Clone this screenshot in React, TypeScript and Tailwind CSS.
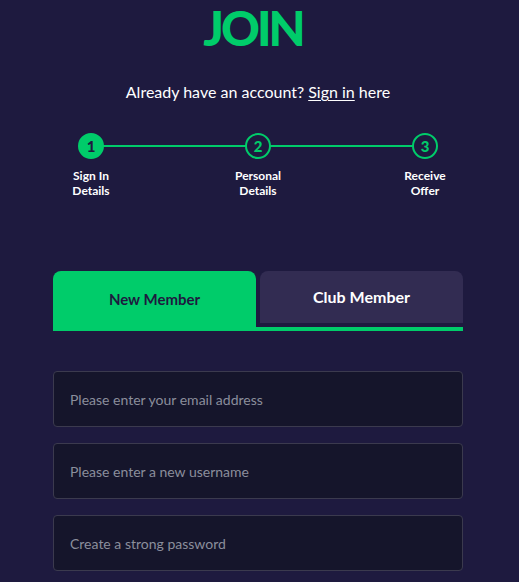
import React, { useState } from 'react';

const steps = [
  { n: 1, label: ['Sign In', 'Details'] },
  { n: 2, label: ['Personal', 'Details'] },
  { n: 3, label: ['Receive', 'Offer'] },
];

export default function App() {
  const [tab, setTab] = useState<'new' | 'club'>('new');

  return (
    <div className="min-h-[582px] bg-[#1e1a3f] font-['Lato','Open_Sans',sans-serif] text-white">
      <div className="w-[410px] ml-[53px] pt-[4px]">
        <h1 className="text-center text-[48px] leading-[48px] font-black text-[#00cc6a] tracking-[-3px] pr-[10px]">JOIN</h1>

        <p className="mt-[30px] text-center text-[16px] leading-[20px]">
          Already have an account? <a href="#" className="underline underline-offset-2">Sign in</a> here
        </p>

        {/* Stepper */}
        <div className="relative mt-[31px] flex justify-between">
          <div className="absolute left-[38px] right-[38px] top-[12px] h-[2px] bg-[#00cc6a]" />
          {steps.map((s) => (
            <div key={s.n} className="relative w-[76px] flex flex-col items-center">
              <div
                className={`w-[26px] h-[26px] rounded-full border-2 border-[#00cc6a] flex items-center justify-center text-[15px] font-black ${
                  s.n === 1 ? 'bg-[#00cc6a] text-[#1e1a3f]' : 'bg-[#1e1a3f] text-[#00cc6a]'
                }`}
              >
                {s.n}
              </div>
              <div className="mt-[9px] text-center text-[12px] leading-[15px] font-bold">
                {s.label[0]}
                <br />
                {s.label[1]}
              </div>
            </div>
          ))}
        </div>

        {/* Tabs */}
        <div className="mt-[73px] border-b-4 border-[#00cc6a] flex gap-[4px] items-start">
          <button
            onClick={() => setTab('new')}
            className={`flex-1 h-[56px] rounded-t-[8px] text-[15px] font-bold ${
              tab === 'new' ? 'bg-[#00cc6a] text-[#1e1a3f]' : 'bg-[#322c52] text-white'
            }`}
          >
            New Member
          </button>
          <button
            onClick={() => setTab('club')}
            className={`flex-1 h-[52px] rounded-t-[8px] text-[16px] font-bold ${
              tab === 'club' ? 'bg-[#00cc6a] text-[#1e1a3f]' : 'bg-[#322c52] text-white'
            }`}
          >
            Club Member
          </button>
        </div>

        {/* Fields */}
        <div className="mt-[40px] flex flex-col gap-[16px]">
          {['Please enter your email address', 'Please enter a new username', 'Create a strong password'].map((p) => (
            <input
              key={p}
              placeholder={p}
              type={p.includes('password') ? 'password' : 'text'}
              className="h-[56px] w-full rounded-[4px] border border-[#3b3a4e] bg-[#15152b] px-[16px] text-[14px] text-white placeholder:text-[#8b8e9c] outline-none"
            />
          ))}
        </div>
      </div>
    </div>
  );
}
